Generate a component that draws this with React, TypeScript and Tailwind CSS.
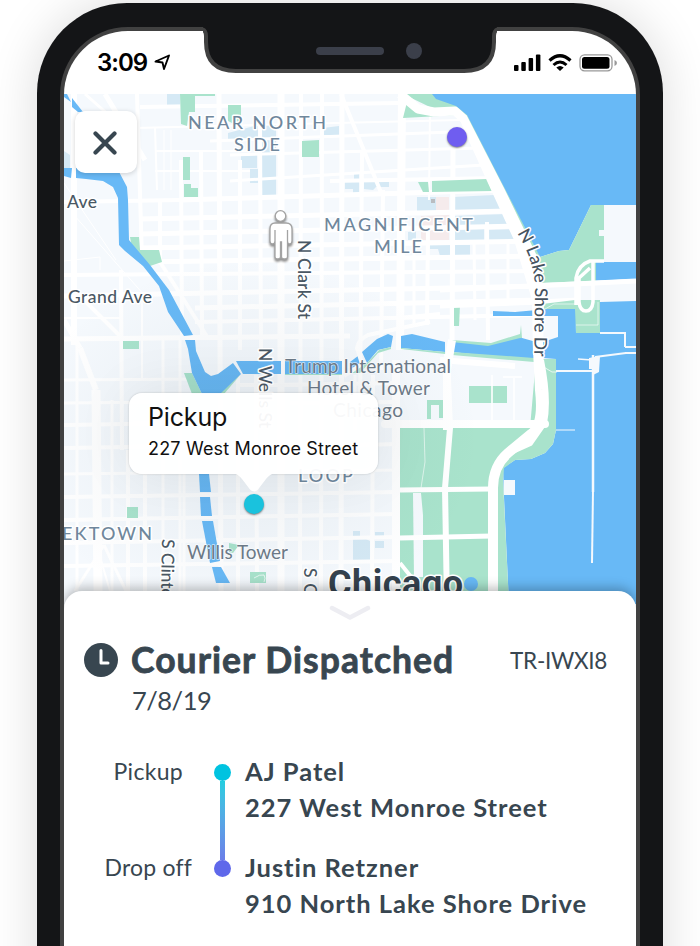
import React from "react";

const LAND = "#f5f9fd";
const WATER = "#68b9f6";
const PARK = "#a9e3cc";
const CAMPUS = "#d5e9f5";

type Seg = [number, number, number, number, number];

// x1, y1, x2, y2, width
const ROADS: Seg[] = [
  // north side, west to east
  [64, 202, 180, 200, 4], [180, 200, 505, 190, 5],
  [140, 219, 515, 211, 5], [140, 234, 520, 226, 5], [140, 248, 535, 241, 5],
  [140, 262, 540, 256, 5], [64, 275, 545, 271, 4], [64, 296, 636, 284, 5],
  [195, 308, 540, 300, 5], [195, 322, 540, 315, 4], [64, 339, 350, 336, 5],
  [135, 128, 460, 120, 2], [155, 151, 250, 151, 2], [155, 171, 250, 171, 2],
  [140, 107, 400, 103, 4], [210, 141, 480, 131, 3], [230, 155, 480, 148, 3],
  [230, 181, 500, 164, 3], [330, 181, 500, 178, 4],
  [74, 94, 74, 345, 6], [137, 94, 142, 260, 4], [155, 128, 157, 190, 2],
  [164, 130, 164, 190, 1], [171, 130, 171, 190, 1],
  [160, 200, 160, 262, 4], [181, 160, 182, 340, 4], [201, 150, 202, 340, 4],
  [219, 94, 221, 591, 5], [240, 160, 240, 350, 4],
  [260, 120, 261, 360, 4], [281, 94, 281, 591, 7], [301, 94, 300, 591, 4],
  [322, 94, 321, 591, 4], [342, 94, 341, 591, 5], [362, 150, 360, 420, 4],
  [383, 190, 381, 370, 4], [402, 94, 400, 350, 8], [430, 110, 429, 200, 2],
  [453, 148, 452, 350, 5], [487, 222, 488, 340, 4], [474, 240, 475, 320, 3],
  [428, 230, 427, 325, 4], [414, 240, 414, 325, 3], [508, 240, 508, 300, 3],
  // diagonals
  [105, 94, 145, 160, 5], [85, 94, 120, 125, 3], [341, 94, 382, 195, 4],
  [160, 262, 208, 338, 4], [80, 296, 120, 336, 4], [64, 183, 116, 260, 1],
  [64, 320, 80, 348, 5], [80, 348, 96, 390, 6], [96, 390, 98, 591, 9],
  [74, 215, 145, 296, 1], [100, 257, 64, 261, 1], [100, 257, 100, 270, 1],
  // west loop
  [121, 270, 122, 450, 4], [142, 296, 142, 380, 2], [163, 340, 163, 591, 3],
  [180, 340, 180, 591, 3], [64, 380, 200, 379, 3], [64, 425, 190, 423, 4],
  [64, 448, 190, 446, 4], [64, 403, 180, 402, 3], [64, 318, 121, 318, 2],
  [77, 345, 77, 591, 3], [112, 400, 112, 591, 3], [128, 450, 128, 591, 4],
  [145, 470, 145, 591, 4], [184, 470, 184, 591, 3],
  [64, 474, 400, 470, 3], [64, 497, 400, 492, 4], [64, 520, 400, 514, 4],
  [64, 543, 400, 537, 4], [64, 566, 400, 561, 4],
  [104, 545, 75, 591, 3], [104, 545, 126, 591, 3], [98, 550, 110, 591, 2],
  // loop
  [238, 375, 238, 591, 4], [256, 375, 257, 591, 4], [270, 385, 400, 383, 4],
  [290, 403, 400, 402, 4], [373, 375, 372, 591, 4], [240, 385, 300, 385, 4],
  [355, 375, 355, 430, 3], [360, 445, 400, 444, 4], [396, 360, 396, 591, 8],
];

const GREENS: string[] = [
  "180,94 215,94 215,96 195,96 195,112 189,112 187,126 181,124",
  "228,105 241,105 241,120 236,125 228,121", "183,157 190,157 190,180 183,180",
  "184,184 191,184 191,188 198,188 198,197 184,197",
  "302,141 319,140 319,157 302,157", "130,237 139,237 140,250 159,250 162,262 150,266 132,248",
  "123,341 139,341 139,349 123,349", "184,373 192,373 202,394 192,394", "219,394 241,374 224,394",
  "418,182 428,182 429,192 423,192", "432,181 487,179 492,191 432,192",
  "469,386 507,386 507,403 469,403", "454,305 460,305 459,326 454,326",
  "427,400 443,400 443,418 439,418 439,405 431,405 431,419 427,419",
  "127,507 138,507 138,518 127,518", "250,572 266,572 266,583 250,583",
  "229,543 239,545 233,553 229,552",
];

const CAMPUSES: string[] = [
  "167,94 180,94 180,108 167,108", "228,133 262,124 276,124 276,197 262,197 262,140 228,139",
  "241,155 257,155 257,168 241,168", "250,169 258,169 258,183 250,183",
  "323,128 339,126 339,135 323,135", "345,182 354,182 354,173 359,173 359,195 353,195 353,189 345,189",
  "364,182 389,181 389,187 376,187 373,190 364,189", "417,197 436,197 436,212 417,212",
  "453,197 494,195 502,209 453,211", "453,216 506,214 512,226 453,227",
  "453,230 484,229 484,240 453,241", "489,230 514,229 522,240 489,240",
  "408,232 416,231 416,240 408,240", "430,245 450,245 450,256 440,256 438,249 430,249",
  "454,245 470,245 470,255 454,255", "353,531 360,531 360,536 370,541 370,560 353,560",
  "375,532 384,532 384,536 375,536", "375,541 384,541 384,548 375,548",
  "64,151 70,155 70,168 64,168",
];

const RIVER: string[] = [
  "64,94 67,94 71,102 64,97", "72,98 83,112 78,112 72,107",
  "64,168 72,168 71,178 64,176",
  "76,168 117,168 127,187 128,200 129,240 150,265 169,290 193,335 184,336 168,312 159,286 143,266 125,251 119,245 118,198 113,187 103,181 86,179 76,178",
  "185,340 195,340 196,351 205,372 211,376 218,374 233,363 241,374 220,394 202,394 192,373 188,349",
  "236,361 281,361 281,374 243,374", "285,361 342,361 342,374 285,374",
  "350,362 358,356 362,363 357,373 350,373",
  "362,352 377,339 388,334 393,336 391,347 378,350 367,363",
  "401,336 412,334 445,342 445,352 401,348",
  "452,342 488,346 520,338 532,342 540,359 500,357 452,352",
  "199,474 209,474 211,492 200,492", "200,497 210,497 212,516 201,516",
  "202,521 213,521 220,561 210,563", "212,567 221,567 230,583 216,583",
];

const PIERS: Seg[] = [
  [556, 371, 594, 371, 2], [593, 355, 593, 492, 2.5], [593, 490, 592, 563, 2],
  [600, 333, 626, 333, 2], [625, 333, 625, 347, 2], [625, 347, 636, 347, 2],
  [595, 357, 626, 353, 2], [625, 353, 636, 353, 2], [578, 359, 592, 360, 1.5],
  [556, 430, 575, 430, 1],
];

const AREA = { fill: "#6f879c", fontSize: 18, fontWeight: 500, letterSpacing: 2 };

function MapCanvas() {
  return (
    <svg viewBox="64 94 572 510" className="block h-[510px] w-[572px] font-[Lato,sans-serif]">
      <defs>
        <radialGradient id="dim" cx="0.5" cy="0.5" r="0.5">
          <stop offset="0.35" stopColor="#35556a" stopOpacity="0.055" />
          <stop offset="1" stopColor="#35556a" stopOpacity="0" />
        </radialGradient>
      </defs>
      <rect x="64" y="94" width="572" height="510" fill={LAND} />
      {CAMPUSES.map((p) => <polygon key={p} points={p} fill={CAMPUS} />)}
      <polygon points="436,197 449,197 449,211 436,211" fill="#f5ebec" />
      <polygon points="421,216 449,215 449,240 421,240" fill="#f5ebec" />
      <rect x="431" y="199" width="4" height="4" fill="#b9bcc0" />
      {ROADS.map(([x1, y1, x2, y2, w], i) => (
        <line key={i} x1={x1} y1={y1} x2={x2} y2={y2} stroke="#fff" strokeWidth={w} />
      ))}
      {GREENS.map((p) => <polygon key={p} points={p} fill={PARK} />)}
      <path d="M254 578q6-4 10-3q2 3 0 7" fill="none" stroke="#fff" strokeOpacity=".7" />

      {/* shoreline parks */}
      <polygon fill={PARK} points="403,94 440,94 466,112 541,258 533,258 461,118 458,110 432,108" />
      <polygon fill={PARK} points="403,118 407,102 428,113 458,112 458,115" />
      <polygon fill={WATER} points="432,94 636,94 636,205 591,205 569,250 559,251 540,257 467,115 456,106 436,99" />
      <polygon fill={PARK} points="540,257 559,251 569,250 591,205 604,205 604,262 595,300 575,309 540,310 535,280" />
      <polygon fill={LAND} points="604,205 636,205 636,262 604,262 604,236 599,236 599,230 604,230" />
      <polygon fill={WATER} points="596,262 636,262 636,279 596,281" />
      <polygon fill={LAND} points="540,283 636,279 636,302 540,303" />

      {/* city streets meeting the harbour */}
      <path d="M440 290L575 284L636 281" stroke="#fff" strokeWidth="5" fill="none" />
      <path d="M440 306L540 302L578 300" stroke="#fff" strokeWidth="5" fill="none" />
      <polygon fill={PARK} points="542,304 575,300 600,300 600,334 576,333 574,312 542,312" />
      <polygon fill={WATER} points="600,302 636,301 636,604 509,604 504,497 503,468 515,460 531,459 545,453 553,444 556,430 556,359 530,357 520,340 520,337 558,337 558,316 493,316 493,311 515,312 548,309 575,309 576,333 600,333" />
      <polygon fill={LAND} points="520,317 556,317 558,319 558,337 540,343 522,338" />
      <polygon fill={PARK} points="452,340 491,343 520,334 521,325 522,338 490,347 452,343" />
      {RIVER.map((p) => <polygon key={p} points={p} fill={WATER} />)}
      <polygon fill={PARK} points="285,374 342,374 342,375 285,375" />
      <polygon fill={PARK} points="367,363 379,350 391,347 391,349 378,353 360,373 350,373" />
      <polygon fill={PARK} points="401,348 445,352 445,354 401,349" />
      <polygon fill={PARK} points="452,352 534,358 534,362 452,355" />
      <path d="M344 376L362 364L357 348Q358 340 368 335L430 322M400 318L440 314" fill="none" stroke="#fff" strokeWidth="4" />

      {/* lakefront park */}
      <polygon fill={PARK} points="536,359 556,359 556,430 553,444 545,453 531,459 515,460 504,468 503,480 509,604 400,604 400,428 530,428" />
      <path d="M413 493L421 493L423 515V577H414Z" fill={LAND} />
      <path d="M424 428L425 462L421 488" fill="none" stroke="#fff" strokeOpacity=".6" />
      <path d="M447 354L450 428L445 488L447 604" fill="none" stroke="#fff" strokeWidth="6" />
      <path d="M400 490L492 489M400 538L492 536" fill="none" stroke="#fff" strokeWidth="5" />
      <path d="M400 563L412 578" fill="none" stroke="#fff" strokeWidth="4" />
      <path d="M385 424H545" stroke="#fff" strokeWidth="8" strokeLinecap="round" />
      <path d="M452 340L447 370V430" fill="none" stroke="#fff" strokeWidth="8" />
      <path d="M440 360L515 366" stroke="#fff" strokeWidth="6" />
      <path d="M503 377H522M514 377V420M492 375V420" stroke="#fff" strokeWidth="2" opacity=".8" fill="none" />
      <path d="M538 350L540 390Q544 425 531 434L508 453Q493 466 493 488V604" fill="none" stroke="#fff" strokeWidth="10" />
      <path d="M541 360Q549 400 544 423L530 443L508 453" fill="none" stroke="#fff" strokeWidth="6" />
      <path d="M542 366L552 372H557" fill="none" stroke="#fff" strokeOpacity=".7" />
      <rect x="504" y="480" width="11" height="15" fill={LAND} />
      <path d="M400 94L418 109L434 112L455 111L464 119" fill="none" stroke="#fff" strokeWidth="9" strokeLinejoin="round" />
      <path d="M456 110L467 116L504 188L538 258L544 300L543 355H533L532 300L514 240L487 181L464 130Z" fill="#fff" />
      <path d="M576 305V278Q578 265 590 261H604M593 262V302Q592 311 586 311Q580 311 579 302V278L590 268" fill="none" stroke="#fff" strokeWidth="3.500" />
      <path d="M576 325H598V302M545 309L554 304L576 304" fill="none" stroke="#fff" strokeOpacity=".6" />
      {PIERS.map(([x1, y1, x2, y2, w], i) => (
        <line key={i} x1={x1} y1={y1} x2={x2} y2={y2} stroke={LAND} strokeWidth={w} />
      ))}
      <path d="M589 358L600 356L599 372L593 375L592 369H589Z" fill={LAND} />
      <circle cx="471" cy="584" r="7" fill={WATER} />
      <ellipse cx="250" cy="440" rx="230" ry="180" fill="url(#dim)" />

      {/* labels */}
      <g stroke="#fff" strokeWidth="3" strokeLinejoin="round" className="[paint-order:stroke]">
        <g {...AREA}>
          <text x="188" y="129" textLength="140">NEAR NORTH</text>
          <text x="234" y="151" textLength="48">SIDE</text>
          <text x="324" y="231" textLength="151">MAGNIFICENT</text>
          <text x="374" y="253" textLength="50">MILE</text>
          <text x="298" y="482" textLength="57">LOOP</text>
          <text x="62" y="540" textLength="92">EKTOWN</text>
        </g>
        <g fill="#4a5864" fontSize="17.5" fontWeight="500">
          <text x="67" y="208" textLength="30">Ave</text>
          <text x="68" y="303" textLength="84">Grand Ave</text>
          <text transform="translate(298 240) rotate(90)" textLength="79">N Clark St</text>
          <text transform="translate(259 348) rotate(90)" textLength="80">N Wells St</text>
          <text transform="translate(162 539) rotate(91)" textLength="69">S Clinton</text>
          <text transform="translate(304 568) rotate(90)" textLength="58">S Clark</text>
        </g>
        <path id="shore" d="M517 233Q535 262 535 290L534 370" fill="none" stroke="none" />
        <text fill="#46535f" fontSize="17.5" fontWeight="500"><textPath href="#shore" textLength="127">N Lake Shore Dr</textPath></text>
        <g fill="#6b7987" fontSize="19" strokeWidth="1.5" strokeOpacity=".7">
          <text x="285" y="373" textLength="166">Trump International</text>
          <text x="307" y="395" textLength="123">Hotel &amp; Tower</text>
          <text x="333" y="417" textLength="70">Chicago</text>
          <text x="187" y="559" textLength="101">Willis Tower</text>
        </g>
        <text x="328" y="596" textLength="135" fill="#34424e" fontSize="36" fontWeight="700" className="font-[Roboto,sans-serif]">Chicago</text>
      </g>

      {/* courier figure */}
      <g className="drop-shadow-[0_2px_1px_rgba(0,0,0,0.45)]" fill="#fff" stroke="#a3a3a3" strokeWidth="1.3">
        <path d="M275 223H286Q292 223 292 229V241Q292 244 289.500 244Q287.500 244 287.500 241V257Q287.500 259 284.500 259Q281.500 259 281.500 257V242H280.500V257Q280.500 259 277.500 259Q275 259 275 257V241Q275 244 272.500 244Q270 244 270 241V229Q270 223 275 223Z" />
        <path d="M275 241V230M287.500 241V230" fill="none" />
        <circle cx="280.500" cy="216" r="5.300" />
      </g>
    </svg>
  );
}

function StatusIcons() {
  return (
    <svg width="104" height="20" viewBox="513 52 104 20">
      <rect x="514" y="64" width="4.500" height="6" rx="1" />
      <rect x="521.300" y="61" width="4.500" height="9" rx="1" />
      <rect x="528.600" y="57" width="4.500" height="13" rx="1" />
      <rect x="535.900" y="53.500" width="4.500" height="16.500" rx="1" />
      <path d="M549.500 59.500Q560 50 570.500 59.500" fill="none" stroke="#000" strokeWidth="3.200" />
      <path d="M553.500 64Q560 58 566.500 64" fill="none" stroke="#000" strokeWidth="3" />
      <path d="M560 70L556.300 66.600Q560 63.600 563.700 66.600Z" />
      <rect x="580" y="53.800" width="32" height="16" rx="4.500" fill="none" stroke="#999" strokeWidth="1.300" />
      <rect x="582" y="56" width="27.500" height="11.700" rx="2.500" />
      <path d="M614.500 59Q617 60 617 62T614.500 65Z" fill="#999" />
    </svg>
  );
}

export default function App() {
  return (
    <div className="h-[946px] w-[700px] overflow-hidden bg-white pt-[3px] text-[#384650]">
      <div className="relative mx-auto h-[1100px] w-[626px] rounded-[90px] bg-[#141517] px-[23px] pt-[24px] shadow-[0_0_50px_rgba(0,0,0,0.14)]">
        <div className="h-[1000px] overflow-hidden rounded-t-[68px] border-4 border-b-0 border-[#414141] bg-white">
          <header className="flex h-[63px] items-center justify-between pt-px pl-[33px] pr-[19px]">
            <div className="flex items-center gap-[7px]">
              <span className="font-[Inter,sans-serif] text-[24px] font-semibold tracking-[-1px] text-black">3:09</span>
              <svg width="17" height="17" viewBox="0 0 17 17" fill="none" stroke="#000" strokeWidth="1.900" strokeLinejoin="round" className="-mt-px">
                <path d="M15 1.500L1.500 7.500L8.500 8.500L10 15Z" />
              </svg>
            </div>
            <StatusIcons />
          </header>

          <section className="relative h-[510px]">
            <MapCanvas />
            <button className="absolute left-[11px] top-[17px] flex size-[62px] items-center justify-center rounded-[10px] bg-white shadow-[0_1px_5px_rgba(0,0,0,0.18)]">
              <svg width="24" height="24" viewBox="0 0 24 24" stroke="#384650" strokeWidth="4.200" strokeLinecap="round" className="mt-[2px] ml-[-2px]">
                <path d="M2.500 2.500L21.500 21.500M21.500 2.500L2.500 21.500" />
              </svg>
            </button>
            <span className="absolute left-[383px] top-[33px] size-5 rounded-full bg-[#6f5df0] shadow-[0_1px_2px_rgba(0,0,0,0.5)]" />
            <div className="absolute left-[65px] top-[299px] h-[81px] w-[249px] rounded-[13px] bg-white/95 pl-[19px] pt-[6px] font-[Inter,sans-serif] text-[#111] shadow-[0_0_2px_rgba(0,0,0,0.22),0_0_60px_rgba(0,0,0,0.07)]">
              <div className="text-[25px] leading-[36px] tracking-[-0.15px]">Pickup</div>
              <div className="text-[18px] leading-[28px] tracking-[0.18px] whitespace-nowrap">227 West Monroe Street</div>
              <svg width="42" height="20" viewBox="0 0 42 20" className="absolute left-[104px] top-[80px]" fill="#fff">
                <path d="M0 0Q5 1 9 6L17 16.500Q21 20.500 25 16.500L33 6Q37 1 42 0Z" />
              </svg>
            </div>
            <span className="absolute left-[180px] top-[400px] size-5 rounded-full bg-[#1ac2dd] shadow-[0_1px_2px_rgba(0,0,0,0.5)]" />
          </section>

          <main className="relative -mt-[13px] h-[400px] rounded-t-[18px] bg-white pl-[20px] pr-[29px] pt-[14px] font-[Lato,sans-serif] shadow-[0_-3px_12px_rgba(0,0,0,0.28)]">
            <svg width="42" height="16" viewBox="0 0 42 16" fill="none" stroke="#ededf2" strokeWidth="4.500" strokeLinecap="round" strokeLinejoin="round" className="ml-[245px]">
              <path d="M3 3L21 12.500L39 3" />
            </svg>
            <div className="mt-[17px] flex h-[44px] items-center">
              <svg width="34" height="34" viewBox="0 0 34 34">
                <circle cx="17" cy="17" r="17" fill="#384650" />
                <path d="M17 7.500V20H24" fill="none" stroke="#fff" strokeWidth="3" strokeLinecap="round" strokeLinejoin="round" />
              </svg>
              <h1 className="ml-[13px] -mt-px text-[35.5px] font-bold tracking-[1.05px] whitespace-nowrap [-webkit-text-stroke:0.8px_#384650]">Courier Dispatched</h1>
              <span className="ml-auto mt-[2px] text-[22.5px] tracking-[-0.3px] whitespace-nowrap">TR-IWXI8</span>
            </div>
            <div className="ml-[48px] pt-[2px] text-[25.5px] leading-[32px] tracking-[-0.5px]">7/8/19</div>
            <div className="mt-[37px] flex">
              <div className="flex w-[108px] flex-col items-end text-[23px] leading-[36px]">
                <span className="mr-[9px] h-[96px] tracking-[0.3px]">Pickup</span>
                <span className="tracking-[0.2px]">Drop off</span>
              </div>
              <div className="ml-[21px] flex w-[18px] flex-col items-center pt-[11px]">
                <span className="size-[17px] rounded-full bg-[#00c3e0]" />
                <span className="h-[79px] w-[5px] bg-linear-to-b from-[#20cde0] to-[#6a7ee8]" />
                <span className="size-[17px] rounded-full bg-[#5f68ea]" />
              </div>
              <div className="ml-[14px] text-[25.5px] leading-[36px] font-bold tracking-[0.98px] whitespace-nowrap">
                <div>AJ Patel</div>
                <div>227 West Monroe Street</div>
                <div className="mt-[24px]">Justin Retzner</div>
                <div>910 North Lake Shore Drive</div>
              </div>
            </div>
          </main>
        </div>

        <svg width="294" height="48" viewBox="203 26 294 48" className="absolute left-[166px] top-[23px]">
          <path d="M198 29H200Q206 29 206 36V42Q206 71 236 71H464Q494 71 494 42V36Q494 29 500 29V24H198Z" fill="#141517" stroke="#414141" strokeWidth="4" />
          <rect x="198" y="22" width="304" height="5" fill="#141517" />
          <rect x="316" y="47" width="68" height="8" rx="4" fill="#3b3f4a" />
          <circle cx="414" cy="51" r="8" fill="#3b3f4a" />
        </svg>
      </div>
    </div>
  );
}
